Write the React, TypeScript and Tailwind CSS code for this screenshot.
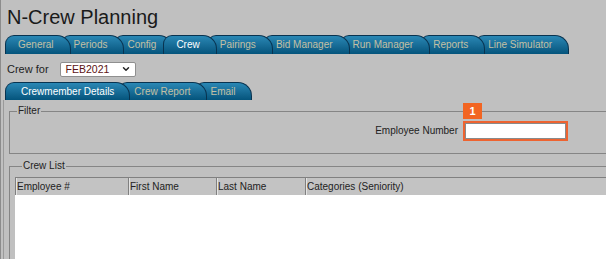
import React from 'react';
import { ChevronDown } from 'lucide-react';

const mainTabs = ['General', 'Periods', 'Config', 'Crew', 'Pairings', 'Bid Manager', 'Run Manager', 'Reports', 'Line Simulator'];
const subTabs = ['Crewmember Details', 'Crew Report', 'Email'];

interface TabStripProps {
  tabs: string[];
  active: string;
  tabClass: string;
  overlapClass: string;
  className?: string;
}

// Blue rounded tabs, each one tucked under the previous one's right curve
const TabStrip: React.FC<TabStripProps> = ({ tabs, active, tabClass, overlapClass, className = '' }) => (
  <div className={`flex items-stretch ${className}`}>
    {tabs.map((t, i) => {
      const on = t === active;
      return (
        <div
          key={t}
          style={{ zIndex: on ? 50 : tabs.length - i }}
          className={`relative flex items-center whitespace-nowrap rounded-tl-[9px] rounded-tr-[14px] border border-b-0 border-[#083350] bg-linear-to-b from-[#2a88b5] to-[#04547c] text-[10px] leading-none ${tabClass} ${i > 0 ? overlapClass : ''} ${on ? 'text-white' : 'text-[#c3c0a4]'}`}
        >
          {t}
        </div>
      );
    })}
  </div>
);

const columns = [
  { label: 'Employee #', w: 'w-[114px] border-l' },
  { label: 'First Name', w: 'w-[88px]' },
  { label: 'Last Name', w: 'w-[89px]' },
  { label: 'Categories (Seniority)', w: 'flex-1' },
];

export default function App() {
  return (
    <div className="h-screen w-full overflow-hidden border-l border-[#8c8c8c] bg-[#c0c0c0] font-[Liberation_Sans,Arial,sans-serif] text-[#222]">
      <div className="flex h-full w-[700px] flex-col">
        <h1 className="pl-[6px] pt-[6px] text-[20px] leading-[23px] text-[#1a1a1a]">N-Crew Planning</h1>

        <TabStrip
          tabs={mainTabs}
          active="Crew"
          tabClass="pl-[12px] pr-[16px]"
          overlapClass="-ml-[10px]"
          className="mt-[6px] h-[19px] pl-[4px]"
        />

        <div className="mt-[8px] flex h-[14px] items-center pl-[6px]">
          <span className="text-[11px] leading-none">Crew for</span>
          <div className="ml-[11px] flex h-[15px] w-[76px] items-center justify-between rounded-[2px] border border-[#8f8f8f] bg-white pl-[5px] pr-[4px]">
            <span className="text-[10.5px] leading-none text-[#5c1414]">FEB2021</span>
            <ChevronDown size={10} strokeWidth={3.5} className="text-[#222]" />
          </div>
        </div>

        <TabStrip
          tabs={subTabs}
          active="Crewmember Details"
          tabClass="pl-[15px] pr-[15px]"
          overlapClass="-ml-[12px]"
          className="mt-[6px] h-[18px] pl-[4px]"
        />

        <div className="ml-[2px] flex min-h-0 flex-1 flex-col border-l border-[#9a9a9a] pl-[5px]">
          <fieldset className="mt-[5px] w-[680px] border border-r-0 border-[#858585] px-0 pb-[12px]">
            <legend className="ml-[7px] px-[1px] text-[10px] leading-[12px]">Filter</legend>
            <div className="mt-[4px] flex w-[558px] items-center justify-end gap-[5px]">
              <span className="text-[10px] leading-none">Employee Number</span>
              <div className="relative h-[20px] w-[105px] border-2 border-[#ee6330] bg-white">
                <div className="h-full w-full border border-[#8a8a8a]" />
                <span className="absolute -top-[20px] -left-[2px] flex h-[16px] w-[19px] items-center justify-center bg-[#f26522] text-[11px] font-bold leading-none text-white">
                  1
                </span>
              </div>
            </div>
          </fieldset>

          <fieldset className="mt-[6px] flex min-h-0 w-[680px] flex-1 flex-col border border-r-0 border-b-0 border-[#858585] pl-[5px]">
            <legend className="ml-[7px] px-[1px] text-[10px] leading-[12px]">Crew List</legend>
            <div className="mt-[5px] flex h-full flex-col">
              <div className="flex h-[18px] border-t border-[#808080] bg-[#c3c3c3]">
                {columns.map((c) => (
                  <div
                    key={c.label}
                    className={`${c.w} flex items-center border-r border-[#808080] pl-[1px] text-[10px] leading-none shadow-[inset_1px_0_0_#e4e4e4]`}
                  >
                    {c.label}
                  </div>
                ))}
              </div>
              <div className="flex-1 bg-white" />
            </div>
          </fieldset>
        </div>
      </div>
    </div>
  );
}
